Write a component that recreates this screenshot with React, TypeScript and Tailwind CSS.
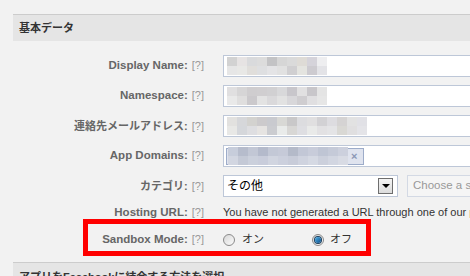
const FONT = "font-['Liberation_Sans','Noto_Sans_CJK_JP',sans-serif]";

const blurA = [
  ["#d2d2d2", "#e6e3e3", "#d9dadc", "#dcdcdc", "#c3c3c5", "#d6d6d6", "#dadada", "#dedbd6", "#d5d3da", "#eeeef0"],
  ["#e6e6e6", "#e8e8e6", "#e0dedb", "#dedfe1", "#e4e4e6", "#e1e1e1", "#d0cfd1", "#e4e4e0", "#cdcbd0", "#e3e3e7"],
];
const blurB = [
  ["#e0dfe0", "#d6d5d6", "#cfcdcf", "#d0ced0", "#d1d0d2", "#d8d8da", "#c8c6cb", "#e1e0e1", "#c8c6ca", "#e4e4e4"],
  ["#e9e9e9", "#dfdede", "#cbc9cc", "#e3e3e3", "#dad9db", "#e2e2e2", "#d8d7da", "#cfcdd0", "#e0dfe1", "#e6e6e6"],
];
const blurC = [
  ["#e2e1df", "#d6d7da", "#d3d2cf", "#cccacc", "#c9cacf", "#d8d8d5", "#c9c8c9", "#dcdcdf", "#e0dfe0", "#d2d1d4", "#dddce0", "#d5d3d3", "#e2e2e2", "#e1e1e6"],
  ["#e8e8e6", "#d5d7db", "#dedee1", "#e6e4e2", "#cbccd0", "#e9ebea", "#d8d7d5", "#dedee2", "#e9eae9", "#e2e1e3", "#e4e4e6", "#d9d8d4", "#e0dfe0", "#e4e4e8"],
];
const blurTag = [
  ["#c7cddb", "#b6bccc", "#c2c7d5", "#b4bacb", "#c3c8d6", "#c6cad8", "#b4bac9", "#c2c7d6", "#c8ccda", "#bfc5d4", "#c5cad8", "#ccd0dd"],
  ["#d2d6e1", "#c4c9d6", "#cbd0dc", "#c9cddb", "#d1d5e0", "#ccd0dd", "#c8ccd9", "#cfd3df", "#d5d9e3", "#ccd0dc", "#d2d6e1", "#d8dbe4"],
];

function Blur({ rows }: { rows: string[][] }) {
  return (
    <div className="flex flex-col">
      {rows.map((r, i) => (
        <div key={i} className="flex">
          {r.map((c, j) => (
            <div key={j} className="h-[9px] w-[10px]" style={{ background: c }} />
          ))}
        </div>
      ))}
    </div>
  );
}

function Label({ text, ja = false }: { text: string; ja?: boolean }) {
  return (
    <div className="w-[204px] shrink-0 text-right text-[11px] leading-none text-[#666]">
      <span className={ja ? "font-bold" : "text-[11.5px] font-bold"}>{text}</span>
      <span className="ml-[4px] text-[#999]">[?]</span>
    </div>
  );
}

function Radio({ checked }: { checked?: boolean }) {
  return (
    <span className="flex h-[12px] w-[12px] items-center justify-center rounded-full border border-[#8a8a8a] bg-gradient-to-br from-[#d8d8d8] to-[#fbfbfb]">
      {checked && (
        <span className="h-[6px] w-[6px] rounded-full bg-gradient-to-br from-[#4fb1e8] to-[#0b4f8a] ring-1 ring-[#1a3d5c]" />
      )}
    </span>
  );
}

export default function App() {
  return (
    <div className={`relative h-[276px] w-[470px] overflow-hidden bg-[#f2f2f2] ${FONT}`}>
      <div className="ml-[13px] mt-[14px] flex h-[27px] items-center border-t border-[#cccccc] bg-[#e5e5e5] pl-[6px] text-[11px] font-bold text-[#333]">
        基本データ
      </div>

      <div className="flex flex-col gap-[8px] pt-[14px]">
        <div className="flex items-center">
          <Label text="Display Name:" />
          <div className="ml-[19px] flex h-[22px] w-[300px] shrink-0 items-center border border-[#bdc7d8] bg-white pl-[3px]">
            <Blur rows={blurA} />
          </div>
        </div>
        <div className="flex items-center">
          <Label text="Namespace:" />
          <div className="ml-[19px] flex h-[22px] w-[300px] shrink-0 items-center border border-[#bdc7d8] bg-white pl-[3px]">
            <Blur rows={blurB} />
          </div>
        </div>
        <div className="flex items-center">
          <Label text="連絡先メールアドレス:" ja />
          <div className="ml-[19px] flex h-[22px] w-[300px] shrink-0 items-center border border-[#bdc7d8] bg-white pl-[3px]">
            <Blur rows={blurC} />
          </div>
        </div>
        <div className="flex items-center">
          <Label text="App Domains:" />
          <div className="ml-[19px] flex h-[22px] w-[300px] shrink-0 items-center border border-[#bdc7d8] bg-white pl-[2px]">
            <div className="flex h-[17px] w-[138px] items-center border border-[#9dacc9] bg-[#dfe3ee] pl-[1px]">
              <Blur rows={blurTag} />
              <span className="ml-[3px] text-[11px] font-bold leading-none text-[#8b97b5]">×</span>
            </div>
          </div>
        </div>
        <div className="flex items-center">
          <Label text="カテゴリ:" ja />
          <div className="ml-[19px] flex h-[22px] w-[175px] shrink-0 items-center justify-between border border-[#bdc7d8] bg-white pl-[3px] pr-[4px]">
            <span className="text-[12px] text-black">その他</span>
            <span className="flex h-[16px] w-[15px] items-center justify-center border border-[#6e6e6e] bg-gradient-to-b from-[#f4f4f4] to-[#dcdcdc]">
              <span className="h-0 w-0 border-x-[4px] border-t-[4px] border-x-transparent border-t-black" />
            </span>
          </div>
          <div className="ml-[9px] flex h-[22px] w-[120px] shrink-0 items-center overflow-hidden whitespace-nowrap border border-[#d3d9e4] bg-[#f5f5f5] pl-[5px] text-[11.5px] text-[#999]">
            Choose a sub-category
          </div>
        </div>
      </div>

      <div className="mt-[10px] flex items-center">
        <Label text="Hosting URL:" />
        <span className="ml-[19px] whitespace-nowrap text-[11px] leading-none text-[#333]">
          You have not generated a URL through one of our partners
        </span>
      </div>

      <div className="mt-[15px] flex items-center">
        <Label text="Sandbox Mode:" />
        <div className="ml-[19px] flex items-center text-[11px] leading-none text-[#333]">
          <Radio />
          <span className="ml-[7px]">オン</span>
          <span className="ml-[48px]"><Radio checked /></span>
          <span className="ml-[6px]">オフ</span>
        </div>
      </div>

      <div className="ml-[13px] mt-[16px] flex h-[27px] items-start border-t border-[#cccccc] bg-[#e5e5e5] pl-[6px] pt-[6px] text-[11px] font-bold text-[#333]">
        アプリをFacebookに結合する方法を選択
      </div>

      <div className="absolute left-[83px] top-[219px] h-[37px] w-[288px] border-[5px] border-[#ff0000]" />
    </div>
  );
}
